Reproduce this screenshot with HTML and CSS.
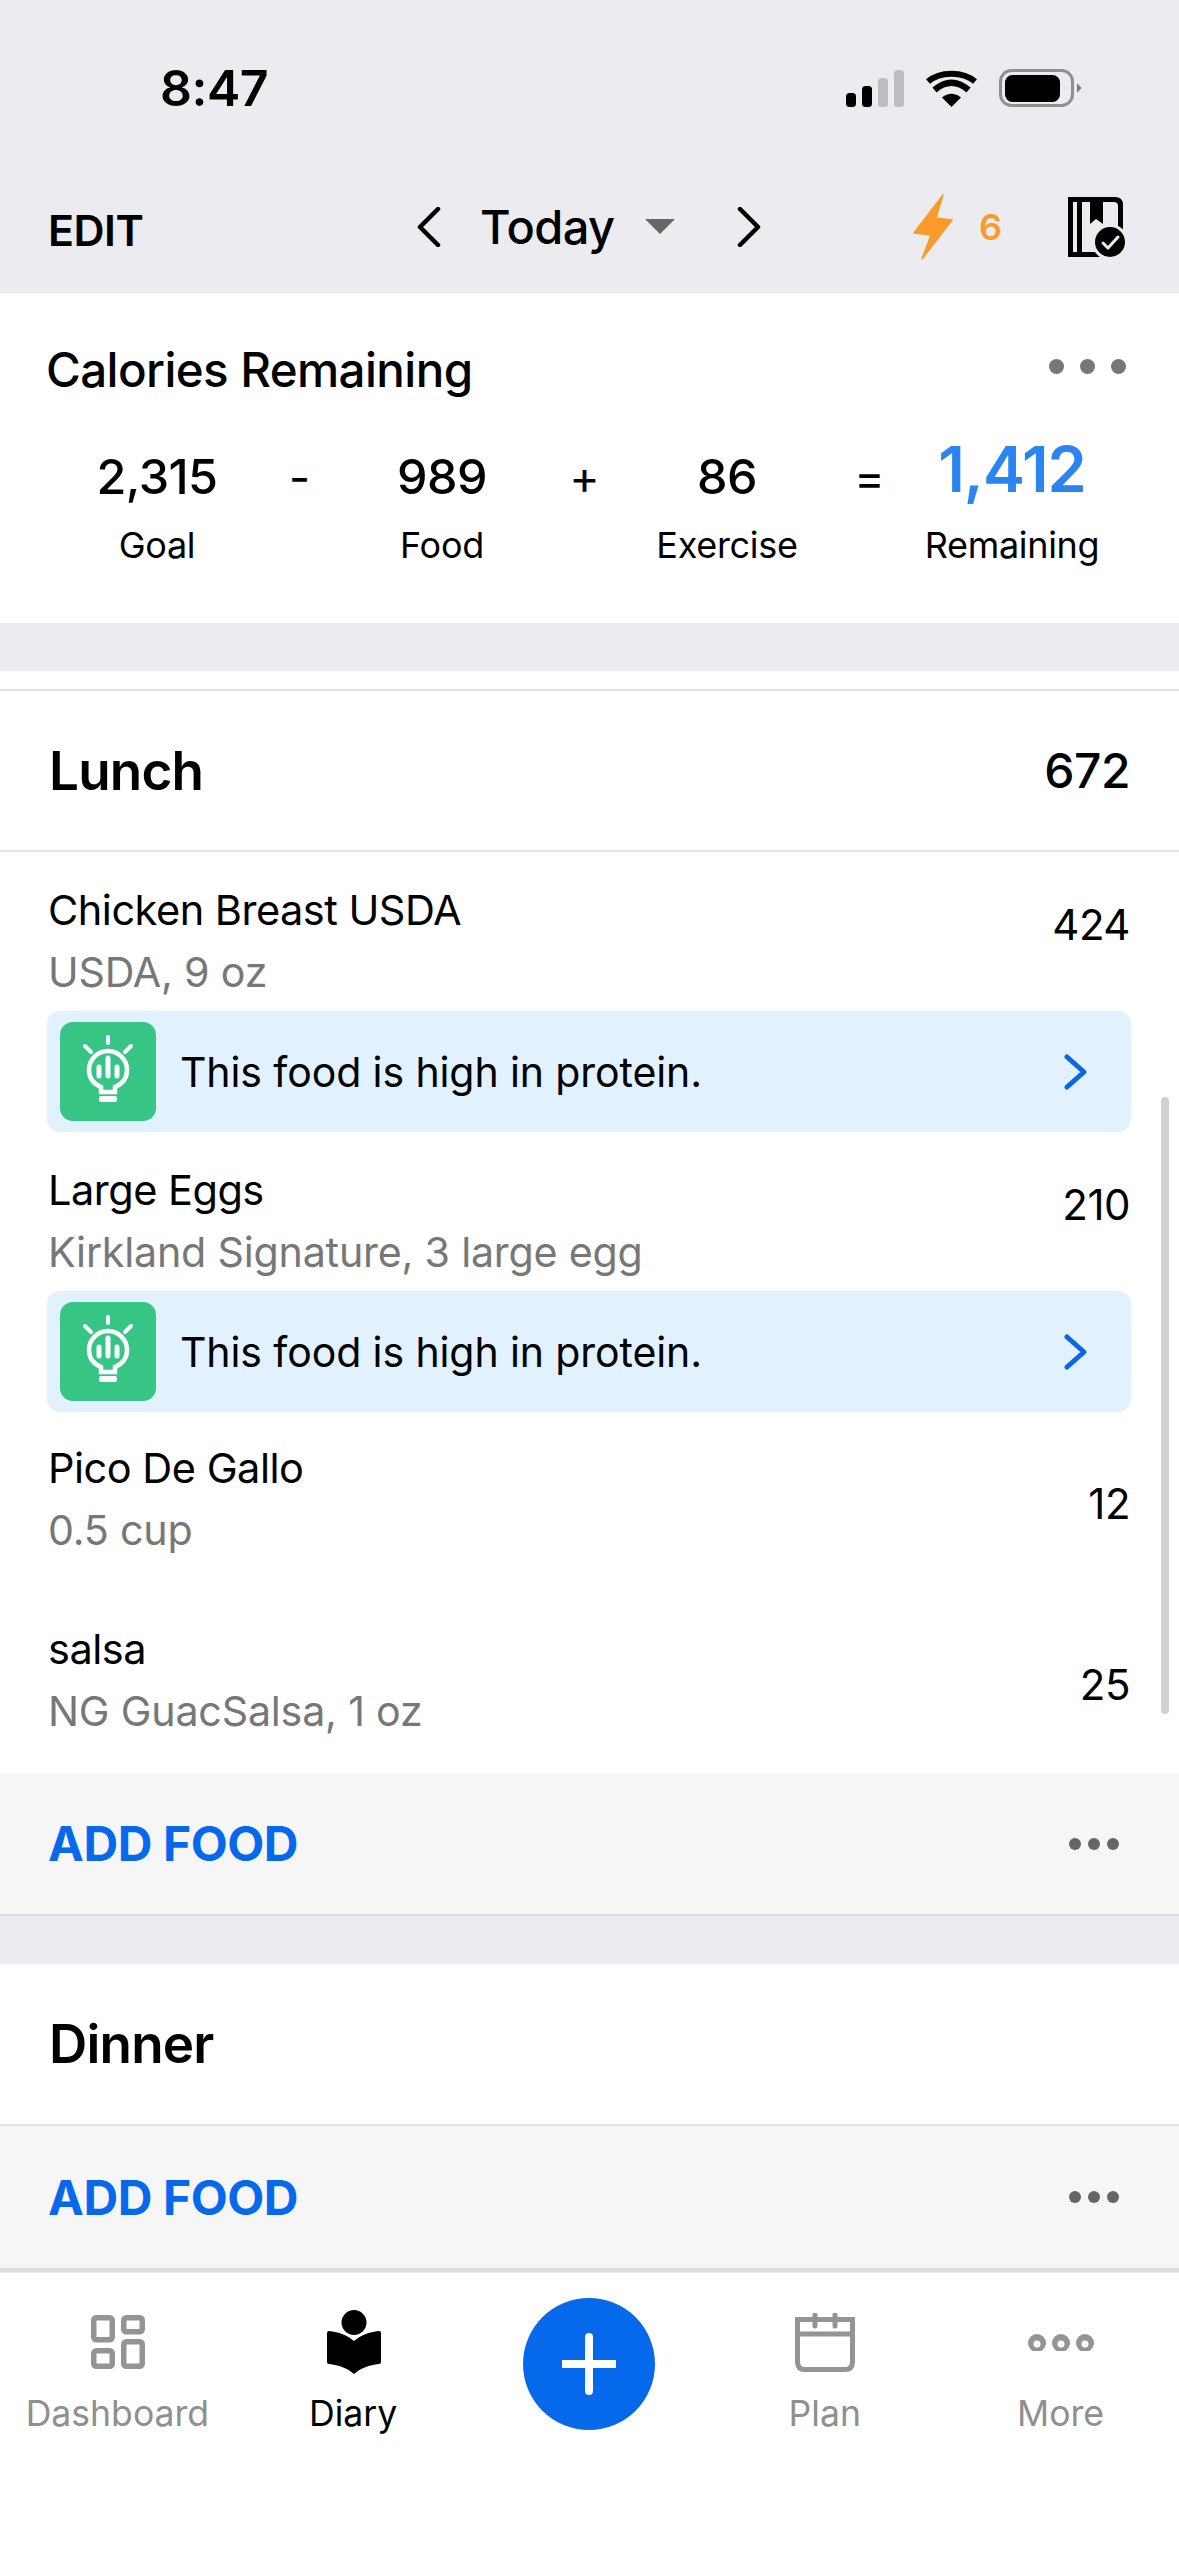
FILE: index.html
```html
<!DOCTYPE html>
<html lang="en">
<head>
<meta charset="utf-8">
<title>Diary</title>
<link rel="stylesheet" href="styles.css">
</head>
<body>
<div class="app">
  <header class="head">
    <div class="status">
      <span class="time">8:47</span>
      <div class="status-icons">
        <svg class="i-signal" viewBox="0 0 58 37"><rect x="0" y="23" width="10" height="14" rx="3.5" fill="#000"/><rect x="16" y="16" width="10" height="21" rx="3.5" fill="#000"/><rect x="32" y="8" width="10" height="29" rx="3.5" fill="#bcbcc1"/><rect x="48" y="0" width="10" height="37" rx="3.5" fill="#bcbcc1"/></svg>
        <svg class="i-wifi" viewBox="0 0 51 37"><path d="M25.500 37 L16 27.500 Q25.500 20 35 27.500Z" fill="#000"/><path d="M8.500 20 Q25.500 5.500 42.500 20" fill="none" stroke="#000" stroke-width="6.500"/><path d="M2 11.500 C14 1 37 1 49 11.500" fill="none" stroke="#000" stroke-width="6"/></svg>
        <svg class="i-batt" viewBox="0 0 83 38"><rect x="1.500" y="1.500" width="72" height="35" rx="11" fill="none" stroke="#8e8e93" stroke-width="3"/><rect x="6" y="6" width="55" height="27" rx="7.500" fill="#000"/><path d="M78 14 L82.500 19 L78 24Z" fill="#77777c"/></svg>
      </div>
    </div>
    <div class="topbar">
      <span class="edit">EDIT</span>
      <div class="datenav">
        <svg class="chev" viewBox="0 0 24 40"><path d="M21 2 L3 20 L21 38" fill="none" stroke="#000" stroke-width="4.500" stroke-linecap="round" stroke-linejoin="round"/></svg>
        <span class="today">Today</span>
        <span class="caret"></span>
        <svg class="chev" viewBox="0 0 24 40"><path d="M3 2 L21 20 L3 38" fill="none" stroke="#000" stroke-width="4.500" stroke-linecap="round" stroke-linejoin="round"/></svg>
      </div>
      <div class="streak">
        <svg class="i-bolt" viewBox="0 0 40 66"><path d="M30 1 L1 39 L18 41 L9 65 L39 26 L23 24Z" fill="#f89b2b" stroke="#f89b2b" stroke-width="1.500" stroke-linejoin="round"/></svg>
        <span class="streak-n">6</span>
      </div>
      <svg class="i-book" viewBox="0 0 58 60"><path d="M0 0 H47 Q55 0 55 8 V40 H42 V60 H0Z" fill="#000"/><path d="M5 5 H9 V55 H5Z M14 5 H22 V27 L28 22 L35 27 V5 H46 Q50 5 50 9 V34 H34 V55 H14Z" fill="#ebebf0"/><circle cx="42" cy="45" r="18" fill="#ebebf0"/><circle cx="42" cy="45" r="15" fill="#000"/><path d="M35 46 L40 51 L50 40" fill="none" stroke="#ebebf0" stroke-width="3" stroke-linecap="round" stroke-linejoin="round"/></svg>
    </div>
  </header>

  <main class="content">
    <section class="summary">
      <div class="summary-top">
        <h2 class="summary-title">Calories Remaining</h2>
        <div class="dots dots-lg"><i></i><i></i><i></i></div>
      </div>
      <div class="calc">
        <div class="stat"><span class="stat-n">2,315</span><span class="stat-l">Goal</span></div>
        <span class="op">-</span>
        <div class="stat"><span class="stat-n">989</span><span class="stat-l">Food</span></div>
        <span class="op">+</span>
        <div class="stat"><span class="stat-n">86</span><span class="stat-l">Exercise</span></div>
        <span class="op">=</span>
        <div class="stat"><span class="stat-n stat-rem">1,412</span><span class="stat-l">Remaining</span></div>
      </div>
    </section>

    <section class="meal meal-lunch">
      <div class="meal-head"><h3 class="meal-name">Lunch</h3><span class="meal-total">672</span></div>
      <div class="food">
        <div class="food-text"><div class="food-name">Chicken Breast USDA</div><div class="food-sub">USDA, 9 oz</div></div>
        <div class="kcal">424</div>
      </div>
      <div class="tip">
        <svg class="i-tip" viewBox="0 0 96 99"><rect width="96" height="99" rx="13" fill="#37c585"/><g fill="none" stroke="#fff" stroke-linecap="round"><path d="M48 15 V21 M25 24 L31 30 M71 24 L65 30" stroke-width="4"/><path d="M41 70 V65 C34 62 29 56 29 48 A19 19 0 0 1 67 48 C67 56 62 62 55 65 V70 Z" stroke-width="4.500"/><path d="M48 36 V54 M39 45 V54 M57 45 V54" stroke-width="5"/></g><rect x="39" y="74" width="18" height="6" rx="2" fill="#fff"/></svg>
        <span class="tip-text">This food is high in protein.</span>
        <svg class="i-next" viewBox="0 0 24 36"><path d="M3 3 L20 18 L3 33" fill="none" stroke="#0a66e6" stroke-width="5" stroke-linecap="round" stroke-linejoin="round"/></svg>
      </div>
      <div class="food">
        <div class="food-text"><div class="food-name">Large Eggs</div><div class="food-sub">Kirkland Signature, 3 large egg</div></div>
        <div class="kcal">210</div>
      </div>
      <div class="tip">
        <svg class="i-tip" viewBox="0 0 96 99"><rect width="96" height="99" rx="13" fill="#37c585"/><g fill="none" stroke="#fff" stroke-linecap="round"><path d="M48 15 V21 M25 24 L31 30 M71 24 L65 30" stroke-width="4"/><path d="M41 70 V65 C34 62 29 56 29 48 A19 19 0 0 1 67 48 C67 56 62 62 55 65 V70 Z" stroke-width="4.500"/><path d="M48 36 V54 M39 45 V54 M57 45 V54" stroke-width="5"/></g><rect x="39" y="74" width="18" height="6" rx="2" fill="#fff"/></svg>
        <span class="tip-text">This food is high in protein.</span>
        <svg class="i-next" viewBox="0 0 24 36"><path d="M3 3 L20 18 L3 33" fill="none" stroke="#0a66e6" stroke-width="5" stroke-linecap="round" stroke-linejoin="round"/></svg>
      </div>
      <div class="food food-plain">
        <div class="food-text"><div class="food-name">Pico De Gallo</div><div class="food-sub">0.5 cup</div></div>
        <div class="kcal">12</div>
      </div>
      <div class="food food-plain">
        <div class="food-text"><div class="food-name">salsa</div><div class="food-sub">NG GuacSalsa, 1 oz</div></div>
        <div class="kcal">25</div>
      </div>
      <div class="add-bar"><span class="add-food">ADD FOOD</span><div class="dots"><i></i><i></i><i></i></div></div>
    </section>

    <section class="meal meal-dinner">
      <div class="meal-head meal-head-d"><h3 class="meal-name">Dinner</h3></div>
      <div class="add-bar add-bar-d"><span class="add-food">ADD FOOD</span><div class="dots"><i></i><i></i><i></i></div></div>
    </section>
  </main>

  <div class="scrollbar"></div>

  <nav class="tabs">
    <div class="tab">
      <div class="tab-icon"><svg class="i-dash" viewBox="0 0 54 54"><g fill="none" stroke="#949494" stroke-width="5.500"><rect x="2.750" y="2.750" width="18.500" height="22" rx="2.500"/><rect x="2.750" y="35.750" width="18.500" height="15.500" rx="2.500"/><rect x="32.750" y="2.750" width="18.500" height="14" rx="2.500"/><rect x="32.750" y="26.750" width="18.500" height="24.500" rx="2.500"/></g></svg></div>
      <span class="tab-label">Dashboard</span>
    </div>
    <div class="tab tab-on">
      <div class="tab-icon"><svg class="i-diary" viewBox="0 0 54 64"><circle cx="27" cy="12.500" r="12.500" fill="#000"/><path d="M2 21 C12 22 20 25 27 31 C34 25 42 22 52 21 Q54 21 54 23 V52 Q54 54 52 54 C42 55 34 58 27 64 C20 58 12 55 2 54 Q0 54 0 52 V23 Q0 21 2 21Z" fill="#000"/></svg></div>
      <span class="tab-label">Diary</span>
    </div>
    <div class="tab tab-add">
      <div class="plus"><svg class="i-plus" viewBox="0 0 54 64"><path d="M27 5 V59 M0 32 H54" fill="none" stroke="#fff" stroke-width="8" stroke-linecap="round"/></svg></div>
    </div>
    <div class="tab">
      <div class="tab-icon"><svg class="i-plan" viewBox="0 0 60 59"><g fill="none" stroke="#949494" stroke-width="5"><path d="M2.500 6.500 H57.500 V49 Q57.500 56.500 50 56.500 H10 Q2.500 56.500 2.500 49Z"/><path d="M2.500 21 H57.500"/></g><path d="M20 2 V13 M40 2 V13" fill="none" stroke="#949494" stroke-width="5" stroke-linecap="round"/></svg></div>
      <span class="tab-label">Plan</span>
    </div>
    <div class="tab">
      <div class="tab-icon"><svg class="i-more" viewBox="0 0 66 17"><g fill="#949494"><circle cx="9" cy="9" r="9"/><circle cx="33" cy="9" r="9"/><circle cx="57" cy="9" r="9"/></g><g fill="#fff"><circle cx="9" cy="10" r="3.500"/><circle cx="33" cy="10" r="3.500"/><circle cx="57" cy="10" r="3.500"/></g></svg></div>
      <span class="tab-label">More</span>
    </div>
  </nav>
</div>
</body>
</html>
```

FILE: styles.css
```css
* { box-sizing: border-box; }
html, body { margin: 0; padding: 0; }
body { background: #fff; font-family: Inter, "Noto Sans", "Liberation Sans", sans-serif; color: #000; }
h2, h3 { margin: 0; font-weight: 500; }
svg { display: block; flex: none; }

.app { position: relative; width: 1179px; height: 2556px; overflow: hidden; display: flex; flex-direction: column; background: #fff; }

/* Header */
.head { height: 293px; background: #ebebf0; flex: none; }
.status { height: 176px; display: flex; align-items: center; padding-left: 160px; }
.time { font-size: 50px; font-weight: 600; letter-spacing: -0.5px; width: 686px; }
.status-icons { display: flex; align-items: center; gap: 22px; }
.i-signal { width: 58px; height: 37px; }
.i-wifi { width: 51px; height: 37px; }
.i-batt { width: 83px; height: 38px; }

.topbar { height: 117px; display: flex; align-items: center; padding-left: 48px; padding-bottom: 16px; }
.edit { font-size: 43px; font-weight: 600; width: 369px; letter-spacing: -0.5px; padding-top: 6px; }
.datenav { display: flex; align-items: center; width: 344px; }
.chev { width: 24px; height: 40px; }
.today { font-size: 47px; font-weight: 500; margin-left: 39px; letter-spacing: -0.6px; width: 168px; }
.caret { width: 0; height: 0; border-left: 15px solid transparent; border-right: 15px solid transparent; border-top: 15px solid #666; margin-right: 62px; }
.streak { display: flex; align-items: center; margin-left: 152px; width: 155px; }
.i-bolt { width: 40px; height: 66px; }
.streak-n { font-size: 36px; font-weight: 600; color: #f89b2b; margin-left: 26px; }
.i-book { width: 58px; height: 60px; }

/* Summary */
.content { flex: 1; background: #ebebf0; }
.summary { height: 330px; background: #fff; padding: 0 47px 0 46px; }
.summary-top { height: 156px; padding-top: 47px; display: flex; justify-content: space-between; align-items: flex-start; padding-right: 6px; }
.summary-title { font-size: 47.5px; line-height: 60px; font-weight: 500; letter-spacing: -0.6px; }
.dots { display: flex; gap: 7px; }
.dots i { width: 12px; height: 12px; border-radius: 50%; background: #666; }
.dots-lg { gap: 16px; padding-top: 19px; }
.dots-lg i { width: 15px; height: 15px; background: #777; }

.calc { display: grid; grid-template-columns: 200px 85px 200px 85px 200px 85px 200px; margin-left: 11px; align-items: start; }
.stat { display: flex; flex-direction: column; align-items: center; }
.stat-n { font-size: 48.5px; line-height: 56px; font-weight: 500; letter-spacing: -0.6px; height: 56px; }
.stat-rem { font-size: 63px; font-weight: 600; color: #2a85f0; letter-spacing: -1px; line-height: 56px; margin-top: -8px; height: 64px; }
.stat-l { font-size: 36px; line-height: 46px; margin-top: 17px; letter-spacing: -0.3px; }
.op { font-size: 46px; line-height: 56px; text-align: center; font-weight: 400; }

/* Meals */
.meal-lunch { margin-top: 48px; padding-top: 18px; background: #fff; }
.meal-head { height: 163px; display: flex; justify-content: space-between; align-items: center; padding: 0 49px; background: #fff; border-top: 2px solid #e2e2e6; border-bottom: 2px solid #e2e2e6; }
.meal-name { font-size: 53px; font-weight: 600; letter-spacing: -0.8px; }
.meal-total { font-size: 48px; font-weight: 500; letter-spacing: -0.5px; }

.food { height: 159px; display: flex; justify-content: space-between; padding: 27px 49px 0 48px; }
.food-plain { height: 180.5px; padding-top: 25px; align-items: flex-start; }
.food-name { font-size: 41.5px; line-height: 62px; letter-spacing: -0.5px; }
.food-sub { font-size: 41.2px; line-height: 62px; color: #777; letter-spacing: -0.2px; }
.kcal { font-size: 42px; line-height: 62px; margin-top: 15px; letter-spacing: -0.5px; }
.food-plain .kcal { margin-top: 36px; }

.tip { margin: 0 48px 0 47px; height: 121px; border-radius: 13px; background: #e1f1fd; display: flex; align-items: center; padding: 0 43px 0 13px; }
.i-tip { width: 96px; height: 99px; }
.tip-text { flex: 1; font-size: 41px; margin-left: 24px; letter-spacing: -0.1px; }
.i-next { width: 24px; height: 36px; }

.add-bar { height: 143px; display: flex; justify-content: space-between; align-items: center; padding: 0 60px 0 48px; background: #f6f6f7; border-bottom: 2px solid #dcdcdf; }
.add-food { font-size: 48px; font-weight: 700; color: #0669ec; letter-spacing: -0.4px; }

.meal-dinner { margin-top: 48px; }
.meal-head-d { height: 162px; border-top: 0; }
.add-bar-d { height: 146px; border-bottom: 4px solid #dcdcdf; }

/* Overlay scrollbar */
.scrollbar { position: absolute; left: 1161px; top: 1097px; width: 8px; height: 617px; border-radius: 4px; background: #d1d1d1; }

/* Tabs */
.tabs { flex: none; height: 283px; background: #fff; display: grid; grid-template-columns: repeat(5, 235.8px); padding-top: 29px; }
.tab { display: flex; flex-direction: column; align-items: center; }
.tab-icon { height: 80px; display: flex; align-items: center; justify-content: center; }
.tab-label { font-size: 35.6px; line-height: 46px; margin-top: 9px; color: #8f8f8f; margin-left: -1px; }
.tab-on .tab-label { color: #000; }
.i-dash { width: 54px; height: 54px; }
.i-diary { width: 54px; height: 64px; }
.i-plan { width: 60px; height: 59px; }
.i-more { width: 66px; height: 17px; }
.plus { width: 132px; height: 132px; border-radius: 50%; background: #0669ec; display: flex; align-items: center; justify-content: center; margin-top: -4px; }
.i-plus { width: 54px; height: 64px; }
```
